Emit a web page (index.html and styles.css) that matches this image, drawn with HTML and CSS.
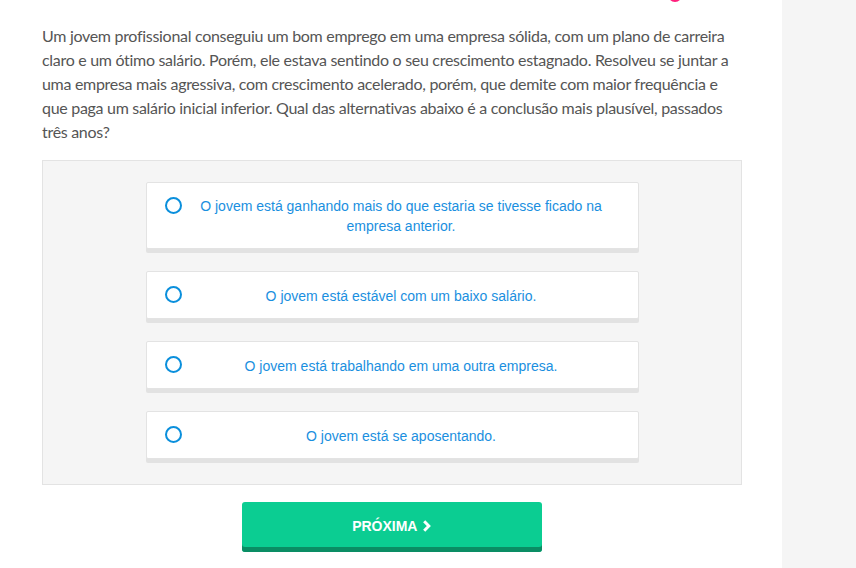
FILE: index.html
```html
<html>
  <head>
    <title>Quiz</title>
    <link rel="stylesheet" href="styles.css">
  </head>
<body>
  <div class="page">
    <main class="content">
      <span class="dot"></span>
      <p class="question">Um jovem profissional conseguiu um bom emprego em uma empresa sólida, com um plano de carreira claro e um ótimo salário. Porém, ele estava sentindo o seu crescimento estagnado. Resolveu se juntar a uma empresa mais agressiva, com crescimento acelerado, porém, que demite com maior frequência e que paga um salário inicial inferior. Qual das alternativas abaixo é a conclusão mais plausível, passados três anos?</p>

      <div class="answers">
        <label class="option">
          <span class="radio"></span>
          <span class="option-text">O jovem está ganhando mais do que estaria se tivesse ficado na empresa anterior.</span>
        </label>
        <label class="option">
          <span class="radio"></span>
          <span class="option-text">O jovem está estável com um baixo salário.</span>
        </label>
        <label class="option">
          <span class="radio"></span>
          <span class="option-text">O jovem está trabalhando em uma outra empresa.</span>
        </label>
        <label class="option">
          <span class="radio"></span>
          <span class="option-text">O jovem está se aposentando.</span>
        </label>
      </div>

      <div class="actions">
        <button class="next">PRÓXIMA <svg class="chev" width="10" height="12" viewBox="0 0 10 12"><path d="M2.2 1.3 L6.8 6 L2.2 10.7" fill="none" stroke="#fff" stroke-width="3"/></svg></button>
      </div>
    </main>
    <aside class="sidebar"></aside>
  </div>
</body>
</html>
```

FILE: styles.css
```css
html, body {
    margin: 0;
    height: 100%;
}
body {
    background: #fff;
    font-family: "Liberation Sans", Arial, sans-serif;
}
.page {
    display: flex;
    height: 100%;
    overflow: hidden;
}
.content {
    position: relative;
    width: 700px;
    padding: 24px 40px 0 42px;
    flex: none;
}
.sidebar {
    flex: 1;
    background: #f5f5f5;
}
/* bottom of the progress marker, scrolled off the top */
.dot {
    position: absolute;
    left: 668px;
    top: -12px;
    width: 14px;
    height: 14px;
    border-radius: 50%;
    background: #ff1f7c;
}
.question {
    margin: 0 0 16px;
    font-family: "Source Sans Pro", Lato, sans-serif;
    font-size: 16px;
    letter-spacing: -0.3px;
    line-height: 24px;
    color: #555;
}
.answers {
    background: #f5f5f5;
    border: 1px solid #e3e3e3;
    padding: 21px 0 25px;
    display: flex;
    flex-direction: column;
    align-items: center;
    gap: 22px;
}
.option {
    position: relative;
    box-sizing: border-box;
    width: 493px;
    padding: 14px 32px 12px 50px;
    background: #fff;
    border: 1px solid #e3e3e3;
    border-radius: 2px;
    box-shadow: 0 4px 0 #e2e2e2;
    text-align: center;
    cursor: pointer;
}
.option:first-child {
    padding-top: 13px;
}
.radio {
    position: absolute;
    left: 18px;
    top: 14px;
    width: 13px;
    height: 13px;
    border: 2.5px solid #0a8fdc;
    border-radius: 50%;
}
.option-text {
    display: block;
    font-size: 14px;
    line-height: 20px;
    color: #1a8fe0;
}
.actions {
    display: flex;
    justify-content: center;
    padding-top: 17px;
}
.next {
    width: 300px;
    height: 50px;
    border: none;
    border-radius: 3px;
    background: #0bcd92;
    box-shadow: inset 0 -5px 0 #0a8d64;
    padding: 0 0 3px;
    color: #fff;
    font-family: "Liberation Sans", Arial, sans-serif;
    font-weight: bold;
    font-size: 14px;
    cursor: pointer;
}
.chev {
    vertical-align: -1px;
    margin-left: 1px;
}
```
